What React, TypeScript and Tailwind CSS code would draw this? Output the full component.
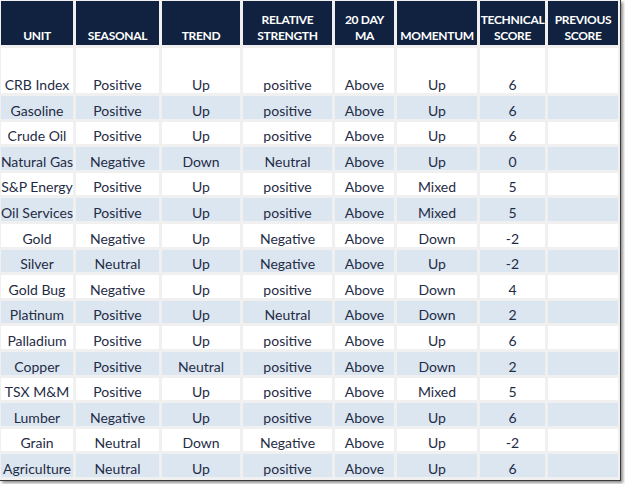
import React from 'react';

type Row = [string, string, string, string, string, string, string];

const rows: Row[] = [
  ['CRB Index', 'Positive', 'Up', 'positive', 'Above', 'Up', '6'],
  ['Gasoline', 'Positive', 'Up', 'positive', 'Above', 'Up', '6'],
  ['Crude Oil', 'Positive', 'Up', 'positive', 'Above', 'Up', '6'],
  ['Natural Gas', 'Negative', 'Down', 'Neutral', 'Above', 'Up', '0'],
  ['S&P Energy', 'Positive', 'Up', 'positive', 'Above', 'Mixed', '5'],
  ['Oil Services', 'Positive', 'Up', 'positive', 'Above', 'Mixed', '5'],
  ['Gold', 'Negative', 'Up', 'Negative', 'Above', 'Down', '-2'],
  ['Silver', 'Neutral', 'Up', 'Negative', 'Above', 'Up', '-2'],
  ['Gold Bug', 'Negative', 'Up', 'positive', 'Above', 'Down', '4'],
  ['Platinum', 'Positive', 'Up', 'Neutral', 'Above', 'Down', '2'],
  ['Palladium', 'Positive', 'Up', 'positive', 'Above', 'Up', '6'],
  ['Copper', 'Positive', 'Neutral', 'positive', 'Above', 'Down', '2'],
  ['TSX M&M', 'Positive', 'Up', 'positive', 'Above', 'Mixed', '5'],
  ['Lumber', 'Negative', 'Up', 'positive', 'Above', 'Up', '6'],
  ['Grain', 'Neutral', 'Down', 'Negative', 'Above', 'Up', '-2'],
  ['Agriculture', 'Neutral', 'Up', 'positive', 'Above', 'Up', '6'],
];

const headers: string[][] = [
  ['UNIT'],
  ['SEASONAL'],
  ['TREND'],
  ['RELATIVE', 'STRENGTH'],
  ['20 DAY', 'MA'],
  ['MOMENTUM'],
  ['TECHNICAL', 'SCORE'],
  ['PREVIOUS', 'SCORE'],
];

const App: React.FC = () => {
  return (
    <div className="w-[625px] h-[484px] bg-white font-['Lato',sans-serif]">
      <div className="w-[621px] h-[481px] bg-[#f0f0f0] border-r border-b border-[#3a3a3a] shadow-[2px_2px_3px_rgba(0,0,0,0.45)] pt-px pl-px">
        <div className="grid grid-cols-[72px_83px_78px_89px_59px_80px_65px_70px] grid-rows-[44px_45px_repeat(15,22.6px)] gap-[3px]">
          {/* Header */}
          {headers.map((h, i) => (
            <div
              key={'h' + i}
              className="bg-[#10223f] text-white text-[12px] font-bold leading-[16px] flex flex-col items-center justify-end pb-[1px] tracking-tight"
            >
              {h.map(line => (
                <span key={line}>{line}</span>
              ))}
            </div>
          ))}

          {/* Rows */}
          {rows.map((r, ri) => {
            const bg = ri % 2 === 0 ? 'bg-white' : 'bg-[#dce6f1]';
            return (
              <React.Fragment key={r[0]}>
                {[...r, ''].map((cell, ci) => (
                  <div
                    key={ci}
                    className={`${bg} text-[#1f2c45] text-[14px] leading-[17px] flex items-end justify-center whitespace-nowrap`}
                  >
                    {cell}
                  </div>
                ))}
              </React.Fragment>
            );
          })}
        </div>
      </div>
    </div>
  );
};

export default App;
